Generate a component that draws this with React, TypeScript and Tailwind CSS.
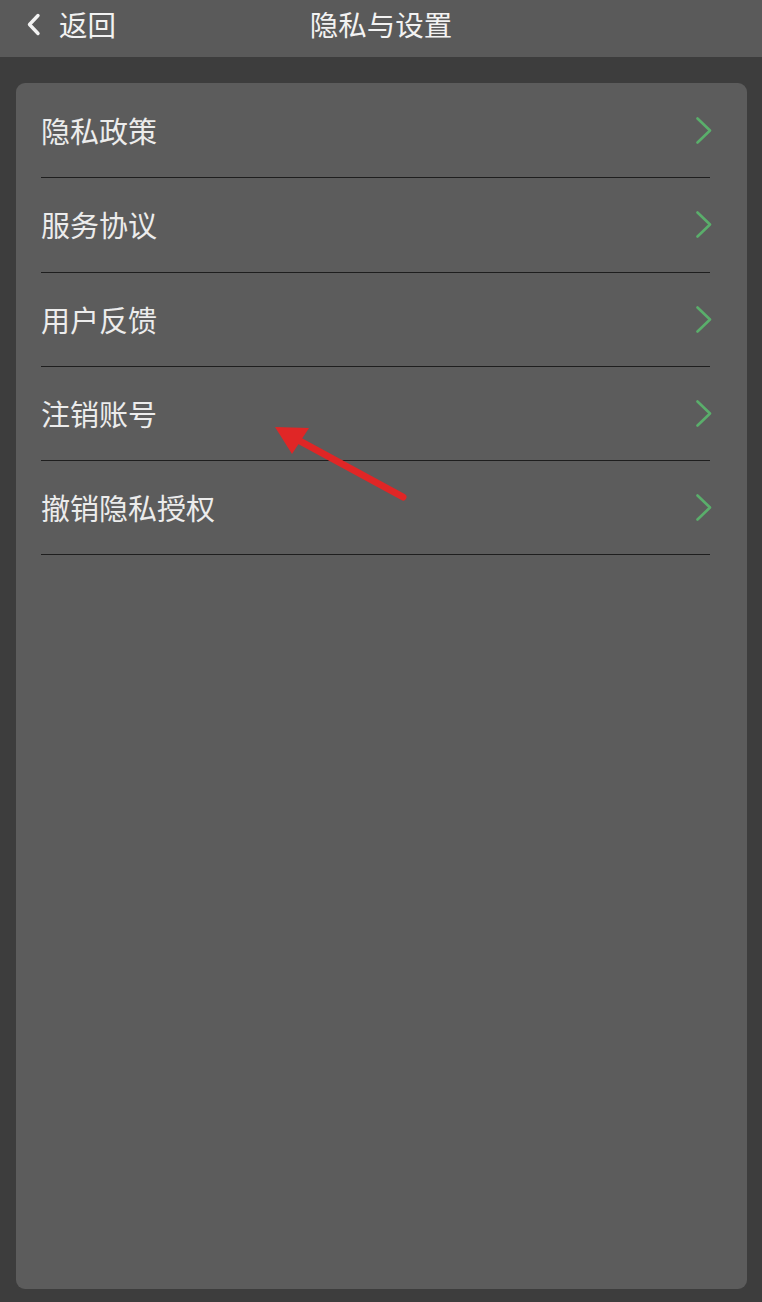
import React from 'react';

const items = ['隐私政策', '服务协议', '用户反馈', '注销账号', '撤销隐私授权'];

const Chevron = () => (
  <svg width="16" height="27" viewBox="0 0 16 27" fill="none">
    <path d="M1.5 1.5 L14 13.5 L1.5 25.5" stroke="#5aae6b" strokeWidth="2.6" strokeLinecap="round" strokeLinejoin="round" />
  </svg>
);

const App = () => {
  return (
    <div
      className="relative w-[762px] h-[1302px] bg-[#3d3d3d] flex flex-col overflow-hidden"
      style={{ fontFamily: '"Noto Sans CJK SC", "Noto Sans", sans-serif' }}
    >
      {/* Header */}
      <div className="relative h-[57px] bg-[#5a5a5a] flex items-center pb-[8px] shrink-0">
        <div className="flex items-center pl-[26px] gap-[18px] text-[#f2f2f2]">
          <svg width="15" height="23" viewBox="0 0 15 23" fill="none">
            <path d="M12 2.5 L3.5 11.5 L12 20.5" stroke="#f2f2f2" strokeWidth="3.4" strokeLinecap="round" strokeLinejoin="round" />
          </svg>
          <span className="text-[28.5px] leading-none">返回</span>
        </div>
        <div className="absolute inset-0 pb-[8px] flex items-center justify-center pointer-events-none">
          <span className="text-[28.5px] leading-none text-[#f2f2f2]">隐私与设置</span>
        </div>
      </div>

      {/* Card */}
      <div className="flex-1 pt-[26px] pl-[16px] pr-[15px] pb-[13px]">
        <div className="h-full bg-[#5c5c5c] rounded-[9px] pt-[1px] pl-[25px] pr-[37px] flex flex-col">
          {items.map((label) => (
            <div key={label} className="h-[94.3px] shrink-0 flex items-center justify-between border-b border-[#1e1e1e]">
              <span className="text-[29px] leading-none text-[#ececec]">{label}</span>
              <span className="-mr-[2px] flex items-center">
                <Chevron />
              </span>
            </div>
          ))}
        </div>
      </div>

      {/* Red annotation arrow */}
      <svg className="absolute left-0 top-0 pointer-events-none" width="762" height="1302" viewBox="0 0 762 1302">
        <line x1="403" y1="497" x2="298" y2="440" stroke="#e02626" strokeWidth="7" strokeLinecap="round" />
        <polygon points="275,427 309,428 292,454" fill="#e02626" />
      </svg>
    </div>
  );
};

export default App;
